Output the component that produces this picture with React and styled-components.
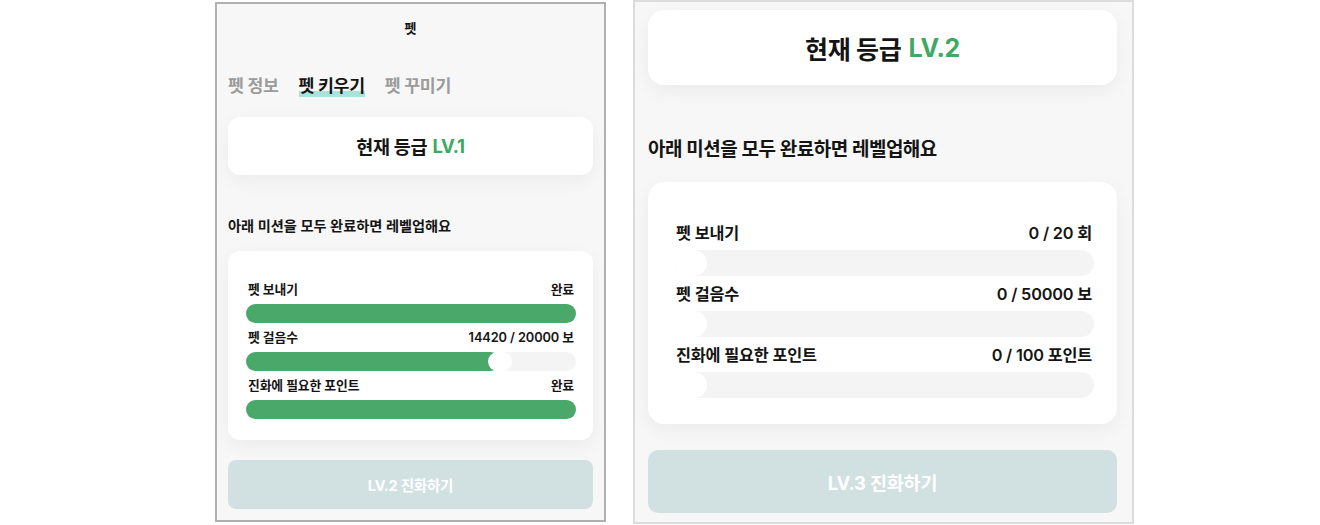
import React from 'react'
import styled, { createGlobalStyle } from 'styled-components';

const GlobalStyle = createGlobalStyle`
  html, body {
    margin: 0;
    padding: 0;
    background: #ffffff;
  }
  body {
    font-family: Inter, "Noto Sans CJK KR", "Noto Sans", sans-serif;
    color: #141414;
  }
`;

// two phone captures, the right one is shown bigger
const dims = {
  sm: {
    panelW: 391, panelH: 520, panelMt: 2, border: '#b1b1b1', pad: '0 11px',
    gradeMt: 20, gradeH: 58, gradeFont: 18.5, radius: 12,
    noteMt: 41, noteFont: 14.2, noteLh: 20, noteLs: 0,
    missionMt: 15, missionPad: '31px 17px 21px 18px', rowGap: 7,
    labelFont: 12.8, labelLh: 16, labelLs: -0.1, barMt: 6, barH: 19,
    btnMt: 20, btnH: 49, btnFont: 14.5, btnRadius: 8,
  },
  lg: {
    panelW: 501, panelH: 524, panelMt: 0, border: '#dcdcdc', pad: '0 15px 0 13px',
    gradeMt: 8, gradeH: 75, gradeFont: 25, radius: 16,
    noteMt: 53, noteFont: 19, noteLh: 24, noteLs: -0.5,
    missionMt: 20, missionPad: '40px 23px 26px 26px', rowGap: 7,
    labelFont: 16.3, labelLh: 22, labelLs: -0.2, barMt: 6, barH: 26,
    btnMt: 26, btnH: 63, btnFont: 18.5, btnRadius: 10,
  },
};

const d = (key) => (p) => dims[p.$size][key];

const Page = styled.div`
  display: flex;
  align-items: flex-start;
  gap: 27px;
  padding-left: 215px;
  height: 525px;
  overflow: hidden;
`;

const Panel = styled.section`
  box-sizing: border-box;
  width: ${d('panelW')}px;
  height: ${d('panelH')}px;
  margin-top: ${d('panelMt')}px;
  border: 2px solid ${d('border')};
  background: #f7f7f7;
  padding: ${d('pad')};
  display: flex;
  flex-direction: column;
`;

const Header = styled.header`
  height: 46px;
  display: flex;
  align-items: center;
  justify-content: center;
  font-size: 13px;
  font-weight: 700;
`;

const Tabs = styled.nav`
  margin-top: 25px;
  display: flex;
  gap: 20px;
`;

const Tab = styled.span`
  display: inline-block;
  font-size: 17.3px;
  line-height: 22px;
  font-weight: 700;
  letter-spacing: -0.3px;
  color: ${(p) => (p.$active ? '#141414' : '#9b9b9b')};
  background: ${(p) =>
    p.$active ? 'linear-gradient(transparent calc(100% - 6px), #a9e4da calc(100% - 6px))' : 'none'};
`;

const GradeCard = styled.div`
  margin-top: ${d('gradeMt')}px;
  height: ${d('gradeH')}px;
  border-radius: ${d('radius')}px;
  background: #ffffff;
  box-shadow: 0 6px 18px rgba(0, 0, 0, 0.05);
  display: flex;
  align-items: center;
  justify-content: center;
  font-size: ${d('gradeFont')}px;
  font-weight: 700;
  letter-spacing: -0.3px;
`;

const Level = styled.span`
  color: #3fa862;
  margin-left: 0.28em;
`;

const Note = styled.p`
  margin: ${d('noteMt')}px 0 0;
  font-size: ${d('noteFont')}px;
  line-height: ${d('noteLh')}px;
  font-weight: 600;
  letter-spacing: ${d('noteLs')}px;
`;

const MissionCard = styled.div`
  margin-top: ${d('missionMt')}px;
  border-radius: ${d('radius')}px;
  background: #ffffff;
  box-shadow: 0 6px 18px rgba(0, 0, 0, 0.05);
  padding: ${d('missionPad')};
  display: flex;
  flex-direction: column;
  gap: ${d('rowGap')}px;
`;

const Mission = styled.div`
  display: flex;
  flex-direction: column;
  gap: ${d('barMt')}px;
`;

const MissionHead = styled.div`
  display: flex;
  justify-content: space-between;
  padding: 0 2px;
  font-size: ${d('labelFont')}px;
  line-height: ${d('labelLh')}px;
  font-weight: 600;
  letter-spacing: ${d('labelLs')}px;
`;

const Track = styled.div`
  position: relative;
  height: ${d('barH')}px;
  border-radius: 999px;
  background: #f4f4f4;
`;

const Fill = styled.div`
  height: 100%;
  border-radius: 999px;
  background: #4aa86a;
`;

const Knob = styled.div`
  position: absolute;
  top: 0;
  height: 100%;
  width: ${(p) => Math.round(dims[p.$size].barH * 1.25)}px;
  border-radius: 999px;
  background: #ffffff;
`;

const EvolveButton = styled.button`
  margin-top: ${d('btnMt')}px;
  height: ${d('btnH')}px;
  border: none;
  border-radius: ${d('btnRadius')}px;
  background: #d1e1e1;
  color: #ffffff;
  font-family: inherit;
  font-size: ${d('btnFont')}px;
  font-weight: 700;
  letter-spacing: -0.2px;
`;

const MissionRow = ({ size, label, value, done, pct }) => {
  const knobW = Math.round(dims[size].barH * 1.25);
  const full = done || pct >= 100;
  return (
    <Mission $size={size}>
      <MissionHead $size={size}>
        <span>{label}</span>
        <span>{done ? '완료' : value}</span>
      </MissionHead>
      <Track $size={size}>
        {full ? (
          <Fill style={{ width: '100%' }} />
        ) : (
          <>
            {pct > 0 && <Fill style={{ width: `calc(${pct}% + ${knobW / 2 + 4}px)` }} />}
            <Knob $size={size} style={{ left: pct > 0 ? `calc(${pct}% + 4px)` : 0 }} />
          </>
        )}
      </Track>
    </Mission>
  );
};

const PetPanel = ({ size, tabs, level, missions, next }) => (
  <Panel $size={size}>
    {tabs && (
      <>
        <Header>펫</Header>
        <Tabs>
          <Tab>펫 정보</Tab>
          <Tab $active>펫 키우기</Tab>
          <Tab>펫 꾸미기</Tab>
        </Tabs>
      </>
    )}
    <GradeCard $size={size}>
      현재 등급<Level>LV.{level}</Level>
    </GradeCard>
    <Note $size={size}>아래 미션을 모두 완료하면 레벨업해요</Note>
    <MissionCard $size={size}>
      {missions.map((m) => (
        <MissionRow key={m.label} size={size} {...m} />
      ))}
    </MissionCard>
    <EvolveButton $size={size}>LV.{next} 진화하기</EvolveButton>
  </Panel>
);

const App = () => {
  return (
    <Page>
      <GlobalStyle />
      <PetPanel
        size="sm"
        tabs
        level={1}
        next={2}
        missions={[
          { label: '펫 보내기', done: true, pct: 100 },
          { label: '펫 걸음수', value: '14420 / 20000 보', pct: 72.1 },
          { label: '진화에 필요한 포인트', done: true, pct: 100 },
        ]}
      />
      <PetPanel
        size="lg"
        level={2}
        next={3}
        missions={[
          { label: '펫 보내기', value: '0 / 20 회', pct: 0 },
          { label: '펫 걸음수', value: '0 / 50000 보', pct: 0 },
          { label: '진화에 필요한 포인트', value: '0 / 100 포인트', pct: 0 },
        ]}
      />
    </Page>
  )
};

export default App;
